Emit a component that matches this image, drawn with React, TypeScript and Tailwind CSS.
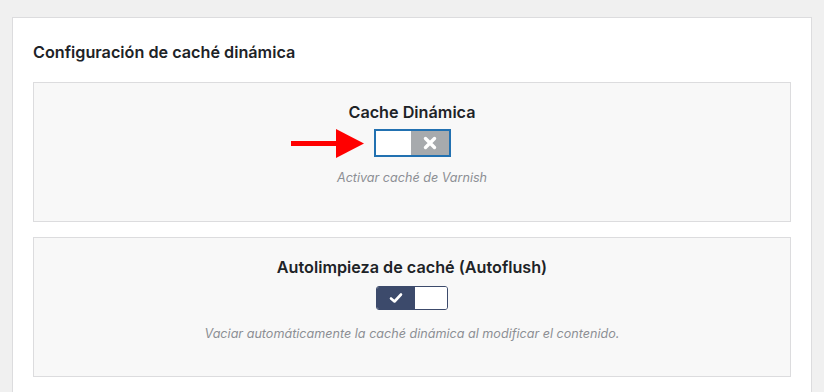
import React from "react";

function Arrow() {
  return (
    <svg width="74" height="30" viewBox="0 0 74 30" className="absolute" style={{ left: -83, top: 0 }}>
      <rect x="0" y="12" width="47" height="5" fill="#ff0000" />
      <polygon points="45,0 73,14.5 45,29" fill="#ff0000" />
    </svg>
  );
}

export default function App() {
  return (
    <div className="w-[824px] h-[392px] bg-[#f0f0f0] overflow-hidden pt-[17px] pl-[12px]" style={{ fontFamily: "Inter, 'Noto Sans', sans-serif" }}>
      <div className="w-[800px] h-[400px] bg-white border border-[#dcdcde] px-[20px] pt-[24px]">
        <h2 className="text-[16.2px] font-semibold text-[#1d2327] leading-[20px]">Configuración de caché dinámica</h2>
        <div className="mt-[20px] flex flex-col gap-[15px]">
          <div className="h-[140px] bg-[#f8f8f8] border border-[#dcdcde] flex flex-col items-center pt-[19px]">
            <div className="text-[16.2px] font-semibold text-[#1d2327] leading-[20px]">Cache Dinámica</div>
            <div className="relative mt-[7px]">
              <Arrow />
              <div className="w-[77px] h-[28px] border-2 border-[#2271b1] flex">
                <div className="w-[35px] bg-white" />
                <div className="flex-1 bg-[#a7aaad] flex items-center justify-center">
                  <svg width="14" height="14" viewBox="0 0 14 14">
                    <path d="M2.5 2.5 L11.5 11.5 M11.5 2.5 L2.5 11.5" stroke="#fff" strokeWidth="3.4" strokeLinecap="round" />
                  </svg>
                </div>
              </div>
            </div>
            <div className="mt-[13px] text-[12.6px] italic text-[#8c8f94] leading-[16px]">Activar caché de Varnish</div>
          </div>
          <div className="h-[140px] bg-[#f8f8f8] border border-[#dcdcde] flex flex-col items-center pt-[19px]">
            <div className="text-[16.2px] font-semibold text-[#1d2327] leading-[20px]">Autolimpieza de caché (Autoflush)</div>
            <div className="mt-[9px] w-[72px] h-[24px] border border-[#3c4a6b] rounded-[3px] flex overflow-hidden">
              <div className="w-[38px] bg-[#3c4a6b] flex items-center justify-center">
                <svg width="14" height="12" viewBox="0 0 14 12">
                  <path d="M2 6.5 L5.5 9.5 L12 2.5" stroke="#fff" strokeWidth="2.6" fill="none" strokeLinecap="round" strokeLinejoin="round" />
                </svg>
              </div>
              <div className="flex-1 bg-white" />
            </div>
            <div className="mt-[16px] text-[12.6px] italic text-[#8c8f94] leading-[16px]">Vaciar automáticamente la caché dinámica al modificar el contenido.</div>
          </div>
        </div>
      </div>
    </div>
  );
}
